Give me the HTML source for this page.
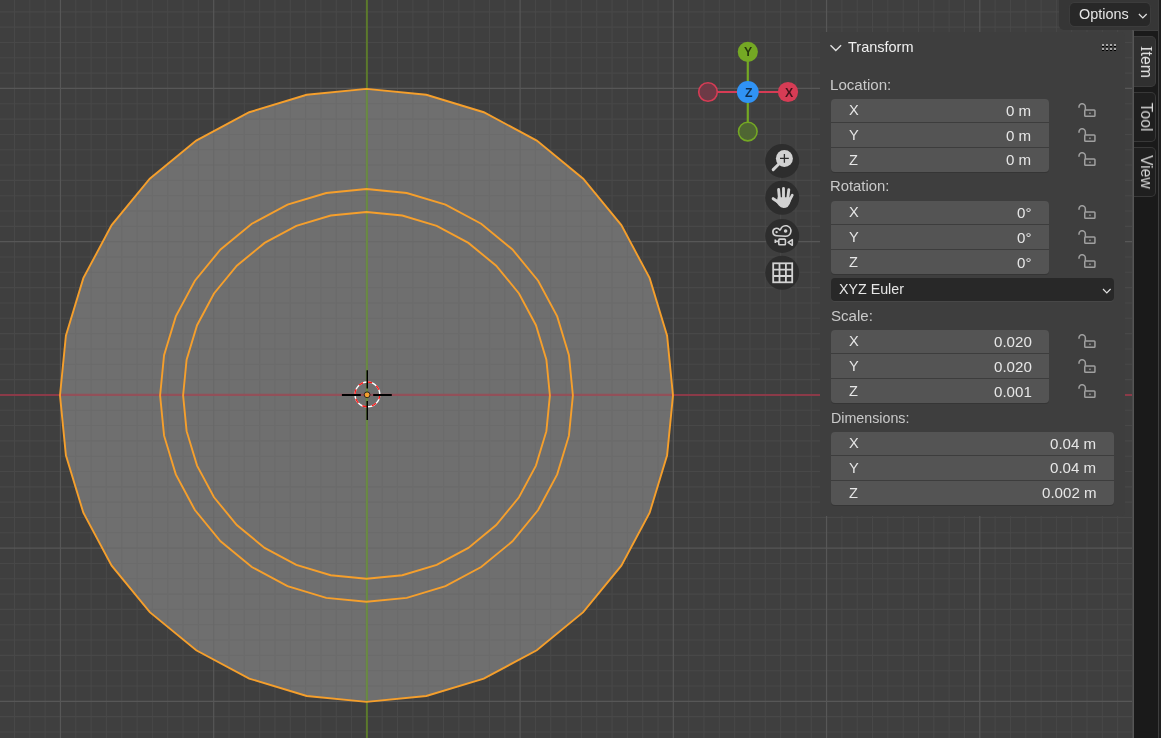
<!DOCTYPE html>
<html><head><meta charset="utf-8"><style>
html,body{margin:0;padding:0;width:1161px;height:738px;overflow:hidden;background:#3f3f3f;}
*{box-sizing:border-box}
body{position:relative;font-family:"Liberation Sans",sans-serif;}
.abs{position:absolute}
.t{position:absolute;white-space:pre;will-change:transform}
.panel{position:absolute;left:820px;top:32px;width:305px;height:484px;background:#3e3e3e;border-radius:4px}
.fld{position:absolute;background:#545454;border-radius:4px;box-shadow:0 1px 0 #353535}
.sep{position:absolute;height:1px;background:#3d3d3d}
.tabs{position:absolute;left:1134px;top:31px;width:24px;height:707px;background:#1a1a1a}
.tab{position:absolute;left:0;width:22px;border-radius:0 5px 5px 0;}
.tabtxt{position:absolute;left:50%;top:50%;transform:translate(-50%,-50%) rotate(90deg);font-size:15.6px;margin-left:1px;color:#e6e6e6;white-space:pre;line-height:16px;will-change:transform}
</style></head><body>
<svg width="1161" height="738" viewBox="0 0 1161 738" style="position:absolute;left:0;top:0">
<rect width="1161" height="738" fill="#3f3f3f"/>
<path d="M-0.83 0V738M14.49 0V738M29.82 0V738M45.14 0V738M75.78 0V738M91.1 0V738M106.43 0V738M121.75 0V738M137.07 0V738M152.39 0V738M167.71 0V738M183.04 0V738M198.36 0V738M229 0V738M244.32 0V738M259.65 0V738M274.97 0V738M290.29 0V738M305.61 0V738M320.93 0V738M336.26 0V738M351.58 0V738M382.22 0V738M397.54 0V738M412.87 0V738M428.19 0V738M443.51 0V738M458.83 0V738M474.15 0V738M489.48 0V738M504.8 0V738M535.44 0V738M550.76 0V738M566.09 0V738M581.41 0V738M596.73 0V738M612.05 0V738M627.37 0V738M642.7 0V738M658.02 0V738M688.66 0V738M703.98 0V738M719.31 0V738M734.63 0V738M749.95 0V738M765.27 0V738M780.59 0V738M795.92 0V738M811.24 0V738M841.88 0V738M857.2 0V738M872.53 0V738M887.85 0V738M903.17 0V738M918.49 0V738M933.81 0V738M949.14 0V738M964.46 0V738M995.1 0V738M1010.42 0V738M1025.75 0V738M1041.07 0V738M1056.39 0V738M1071.71 0V738M1087.03 0V738M1102.36 0V738M1117.68 0V738M0 11.85H1134M0 27.17H1134M0 42.49H1134M0 57.82H1134M0 73.14H1134M0 103.78H1134M0 119.1H1134M0 134.43H1134M0 149.75H1134M0 165.07H1134M0 180.39H1134M0 195.71H1134M0 211.04H1134M0 226.36H1134M0 257H1134M0 272.32H1134M0 287.65H1134M0 302.97H1134M0 318.29H1134M0 333.61H1134M0 348.93H1134M0 364.26H1134M0 379.58H1134M0 410.22H1134M0 425.54H1134M0 440.87H1134M0 456.19H1134M0 471.51H1134M0 486.83H1134M0 502.15H1134M0 517.48H1134M0 532.8H1134M0 563.44H1134M0 578.76H1134M0 594.09H1134M0 609.41H1134M0 624.73H1134M0 640.05H1134M0 655.37H1134M0 670.7H1134M0 686.02H1134M0 716.66H1134M0 731.98H1134" stroke="#484848" stroke-width="1.1" fill="none"/>
<path d="M60.46 0V738M213.68 0V738M520.12 0V738M673.34 0V738M826.56 0V738M979.78 0V738M1133 0V738M0 88.46H1134M0 241.68H1134M0 548.12H1134M0 701.34H1134" stroke="#575757" stroke-width="1.2" fill="none"/>
<polygon points="366.5,88.9 426.3,94.79 483.79,112.23 536.78,140.55 583.23,178.67 621.35,225.12 649.67,278.11 667.11,335.6 673,395.4 667.11,455.2 649.67,512.69 621.35,565.68 583.23,612.13 536.78,650.25 483.79,678.57 426.3,696.01 366.5,701.9 306.7,696.01 249.21,678.57 196.22,650.25 149.77,612.13 111.65,565.68 83.33,512.69 65.89,455.2 60,395.4 65.89,335.6 83.33,278.11 111.65,225.12 149.77,178.67 196.22,140.55 249.21,112.23 306.7,94.79" fill="#6f6f6f"/>
<path d="M-0.83 0V738M14.49 0V738M29.82 0V738M45.14 0V738M75.78 0V738M91.1 0V738M106.43 0V738M121.75 0V738M137.07 0V738M152.39 0V738M167.71 0V738M183.04 0V738M198.36 0V738M229 0V738M244.32 0V738M259.65 0V738M274.97 0V738M290.29 0V738M305.61 0V738M320.93 0V738M336.26 0V738M351.58 0V738M382.22 0V738M397.54 0V738M412.87 0V738M428.19 0V738M443.51 0V738M458.83 0V738M474.15 0V738M489.48 0V738M504.8 0V738M535.44 0V738M550.76 0V738M566.09 0V738M581.41 0V738M596.73 0V738M612.05 0V738M627.37 0V738M642.7 0V738M658.02 0V738M688.66 0V738M703.98 0V738M719.31 0V738M734.63 0V738M749.95 0V738M765.27 0V738M780.59 0V738M795.92 0V738M811.24 0V738M841.88 0V738M857.2 0V738M872.53 0V738M887.85 0V738M903.17 0V738M918.49 0V738M933.81 0V738M949.14 0V738M964.46 0V738M995.1 0V738M1010.42 0V738M1025.75 0V738M1041.07 0V738M1056.39 0V738M1071.71 0V738M1087.03 0V738M1102.36 0V738M1117.68 0V738M0 11.85H1134M0 27.17H1134M0 42.49H1134M0 57.82H1134M0 73.14H1134M0 103.78H1134M0 119.1H1134M0 134.43H1134M0 149.75H1134M0 165.07H1134M0 180.39H1134M0 195.71H1134M0 211.04H1134M0 226.36H1134M0 257H1134M0 272.32H1134M0 287.65H1134M0 302.97H1134M0 318.29H1134M0 333.61H1134M0 348.93H1134M0 364.26H1134M0 379.58H1134M0 410.22H1134M0 425.54H1134M0 440.87H1134M0 456.19H1134M0 471.51H1134M0 486.83H1134M0 502.15H1134M0 517.48H1134M0 532.8H1134M0 563.44H1134M0 578.76H1134M0 594.09H1134M0 609.41H1134M0 624.73H1134M0 640.05H1134M0 655.37H1134M0 670.7H1134M0 686.02H1134M0 716.66H1134M0 731.98H1134" stroke="#6b6b6b" stroke-width="1.1" fill="none" clip-path="url(#disk)"/>
<path d="M60.46 0V738M213.68 0V738M520.12 0V738M673.34 0V738M826.56 0V738M979.78 0V738M1133 0V738M0 88.46H1134M0 241.68H1134M0 548.12H1134M0 701.34H1134" stroke="#696969" stroke-width="1.2" fill="none" clip-path="url(#disk)"/>
<clipPath id="disk"><polygon points="366.5,88.9 426.3,94.79 483.79,112.23 536.78,140.55 583.23,178.67 621.35,225.12 649.67,278.11 667.11,335.6 673,395.4 667.11,455.2 649.67,512.69 621.35,565.68 583.23,612.13 536.78,650.25 483.79,678.57 426.3,696.01 366.5,701.9 306.7,696.01 249.21,678.57 196.22,650.25 149.77,612.13 111.65,565.68 83.33,512.69 65.89,455.2 60,395.4 65.89,335.6 83.33,278.11 111.65,225.12 149.77,178.67 196.22,140.55 249.21,112.23 306.7,94.79"/></clipPath>
<line x1="0" y1="394.9" x2="1134" y2="394.9" stroke="#8b3a48" stroke-width="2"/>
<line x1="366.9" y1="0" x2="366.9" y2="738" stroke="#5c7a2c" stroke-width="2"/>
<g clip-path="url(#disk)">
<line x1="0" y1="394.9" x2="1134" y2="394.9" stroke="#925059" stroke-width="2.1"/>
<line x1="366.9" y1="0" x2="366.9" y2="738" stroke="#6a8a45" stroke-width="2"/>
</g>
<polygon points="366.5,88.9 426.3,94.79 483.79,112.23 536.78,140.55 583.23,178.67 621.35,225.12 649.67,278.11 667.11,335.6 673,395.4 667.11,455.2 649.67,512.69 621.35,565.68 583.23,612.13 536.78,650.25 483.79,678.57 426.3,696.01 366.5,701.9 306.7,696.01 249.21,678.57 196.22,650.25 149.77,612.13 111.65,565.68 83.33,512.69 65.89,455.2 60,395.4 65.89,335.6 83.33,278.11 111.65,225.12 149.77,178.67 196.22,140.55 249.21,112.23 306.7,94.79" fill="none" stroke="#f59f2c" stroke-width="1.9"/>
<polygon points="366.5,189 406.77,192.97 445.49,204.71 481.17,223.78 512.45,249.45 538.12,280.73 557.19,316.41 568.93,355.13 572.9,395.4 568.93,435.67 557.19,474.39 538.12,510.07 512.45,541.35 481.17,567.02 445.49,586.09 406.77,597.83 366.5,601.8 326.23,597.83 287.51,586.09 251.83,567.02 220.55,541.35 194.88,510.07 175.81,474.39 164.07,435.67 160.1,395.4 164.07,355.13 175.81,316.41 194.88,280.73 220.55,249.45 251.83,223.78 287.51,204.71 326.23,192.97" fill="none" stroke="#f59f2c" stroke-width="1.9"/>
<polygon points="366.5,212 402.28,215.52 436.68,225.96 468.39,242.91 496.18,265.72 518.99,293.51 535.94,325.22 546.38,359.62 549.9,395.4 546.38,431.18 535.94,465.58 518.99,497.29 496.18,525.08 468.39,547.89 436.68,564.84 402.28,575.28 366.5,578.8 330.72,575.28 296.32,564.84 264.61,547.89 236.82,525.08 214.01,497.29 197.06,465.58 186.62,431.18 183.1,395.4 186.62,359.62 197.06,325.22 214.01,293.51 236.82,265.72 264.61,242.91 296.32,225.96 330.72,215.52" fill="none" stroke="#f59f2c" stroke-width="1.9"/>
<!-- 3d cursor -->
<g>
<circle cx="367.4" cy="394.4" r="12.4" fill="none" stroke="#ffffff" stroke-width="1.4"/>
<circle cx="367.4" cy="394.4" r="12.4" fill="none" stroke="#ff1a1a" stroke-width="1.4" stroke-dasharray="4.87" transform="rotate(-90 367.4 394.4)"/>
<path d="M341.9 395H360.8M373.2 395H391.8" stroke="#000" stroke-width="1.8"/><path d="M367.25 370.2V388.6M367.25 401V420" stroke="#000" stroke-width="1.5"/>
<circle cx="367.1" cy="394.8" r="2.9" fill="#f5a030" stroke="#1c1c1c" stroke-width="0.9"/>
</g>
<!-- gizmo -->
<line x1="708" y1="92" x2="788" y2="92" stroke="#d63c55" stroke-width="2.2"/>
<line x1="747.8" y1="52" x2="747.8" y2="132" stroke="#74a824" stroke-width="2.2"/>
<circle cx="708" cy="92" r="9.3" fill="#6d3a46" stroke="#d63c55" stroke-width="1.6"/>
<circle cx="747.8" cy="131.6" r="9.3" fill="#4f6633" stroke="#74a824" stroke-width="1.6"/>
<circle cx="747.8" cy="51.8" r="10.1" fill="#74a824"/>
<circle cx="788" cy="92" r="10.1" fill="#d63c55"/>
<circle cx="747.8" cy="92" r="10.9" fill="#3093f5"/>

<!-- nav buttons -->
<g fill="#2d2d2d">
<circle cx="782.2" cy="160.9" r="17"/>
<circle cx="782.2" cy="197.7" r="17"/>
<circle cx="782.2" cy="235.9" r="17"/>
<circle cx="782.2" cy="272.7" r="17"/>
</g>
<g fill="#d2d2d2" stroke="none">
<circle cx="784.4" cy="158.4" r="8.5"/>
<path d="M773.2 169.6L778.6 164.2" stroke="#d2d2d2" stroke-width="3" stroke-linecap="round"/>
<path d="M780 158.4H788.8M784.4 154V162.8" stroke="#2c2c2c" stroke-width="1.3"/>
</g>
<g stroke="#d2d2d2" stroke-linecap="round" fill="none">
<path d="M778.6 189.5L779.4 198M783.5 188.4V198M788.8 189.7L787.8 198" stroke-width="2.9"/>
<path d="M792.3 195.2L789.6 200.5" stroke-width="2.7"/>
<path d="M773.2 198.7L777.8 201.8" stroke-width="3"/>
</g>
<path d="M777.6 197.2H790.6L791 200.5Q790 204.5 787.6 207Q786 208.1 783.6 208.1Q780.6 208 778.8 205.6L776.2 202.2L777.2 199.5Z" fill="#d2d2d2"/>
<g fill="none" stroke="#d2d2d2" stroke-width="1.6" stroke-linejoin="round">
<path d="M776.6 235.7A3.7 3.7 0 1 1 779.8 230.15L780.62 229.19A5.3 5.3 0 1 1 785.6 236.3Z"/>
<circle cx="776.6" cy="232.1" r="1.2" fill="#d2d2d2" stroke="none"/>
<circle cx="785.6" cy="231" r="1.8" fill="#d2d2d2" stroke="none"/>
<rect x="778.8" y="239.1" width="6.6" height="5.6" rx="0.8"/>
<path d="M775.3 239.6V243.1M775.3 241.35H778.8"/>
<path d="M792.3 239.6V245.3L788.1 242.45Z"/>
</g>
<g fill="none" stroke="#d2d2d2" stroke-width="1.8">
<rect x="773.2" y="263.3" width="19" height="19"/>
<path d="M779.5 263.3V282.3M785.9 263.3V282.3M773.2 269.6H792.2M773.2 276H792.2"/>
</g>
</svg>
<div class="t" style="left:743.9px;top:46.19px;font-size:12.3px;line-height:12.3px;color:rgba(0,0,0,0.68);transform:scaleY(1.0);transform-origin:0 10.41px;font-weight:bold">Y</div>
<div class="t" style="left:784.8px;top:86.89px;font-size:12.3px;line-height:12.3px;color:rgba(0,0,0,0.68);transform:scaleY(1.0);transform-origin:0 10.41px;font-weight:bold">X</div>
<div class="t" style="left:744.6px;top:87.09px;font-size:12.3px;line-height:12.3px;color:rgba(0,0,0,0.68);transform:scaleY(1.0);transform-origin:0 10.41px;font-weight:bold">Z</div>
<!-- header region -->
<div class="abs" style="left:1059.3px;top:0;width:98.7px;height:29.6px;background:#363636;border-radius:0 0 0 5px"></div>
<div class="abs" style="left:1069.6px;top:3px;width:80.6px;height:23.2px;background:#282828;border-radius:4.5px;box-shadow:0 0 0 1px #3c3c3c"></div>
<div class="t" style="left:1079.4px;top:6.61px;font-size:14.4px;line-height:14.4px;color:#e6e6e6;transform:scaleY(1.0);transform-origin:0 12.19px;">Options</div>
<svg class="abs" style="left:1136px;top:10.5px" width="14" height="10" viewBox="0 0 14 10"><path d="M2.9 3L6.8 6.9L10.7 3" fill="none" stroke="#e0e0e0" stroke-width="1.3"/></svg>
<div class="abs" style="left:1133px;top:31px;width:1px;height:707px;background:#565656"></div>
<div class="abs" style="left:1132px;top:31px;width:1px;height:707px;background:#4a4a4a"></div>
<div class="tabs"></div>
<div class="abs" style="left:1158px;top:0;width:1px;height:738px;background:#3e3e3e"></div>
<div class="abs" style="left:1159px;top:0;width:2px;height:738px;background:#1f1f1f"></div>
<div class="tab abs" style="left:1134px;top:36px;height:51px;background:#303030;border:1px solid #3c3c3c;border-left:none"><div class="tabtxt" style="font-size:15.8px"><span style="font-family:'Liberation Serif',serif;font-size:16.5px">I</span>tem</div></div>
<div class="tab abs" style="left:1134px;top:92px;height:49.5px;background:#1f1f1f;border:1px solid #383838;border-left:none"><div class="tabtxt" style="color:#d8d8d8">Tool</div></div>
<div class="tab abs" style="left:1134px;top:146.5px;height:50.5px;background:#1f1f1f;border:1px solid #383838;border-left:none"><div class="tabtxt" style="color:#d8d8d8">View</div></div>
<!-- panel -->
<div class="panel"></div>
<svg class="abs" style="left:828px;top:42px" width="16" height="12" viewBox="0 0 16 12"><path d="M2.5 3.2L7.8 8.5L13.1 3.2" fill="none" stroke="#e0e0e0" stroke-width="1.4"/></svg>
<div class="t" style="left:847.9px;top:40.43px;font-size:14.5px;line-height:14.5px;color:#f0f0f0;transform:scaleY(1.0);transform-origin:0 12.27px;">Transform</div>
<svg class="abs" style="left:1101px;top:43px" width="17" height="10" viewBox="0 0 17 10">
<g fill="#000"><rect x="1" y="3" width="2" height="1"/><rect x="1" y="7" width="2" height="1"/><rect x="5" y="3" width="2" height="1"/><rect x="5" y="7" width="2" height="1"/><rect x="9" y="3" width="2" height="1"/><rect x="9" y="7" width="2" height="1"/><rect x="13" y="3" width="2" height="1"/><rect x="13" y="7" width="2" height="1"/></g>
<g fill="#a8a8a8"><rect x="1" y="1" width="2" height="2"/><rect x="1" y="5" width="2" height="2"/><rect x="5" y="1" width="2" height="2"/><rect x="5" y="5" width="2" height="2"/><rect x="9" y="1" width="2" height="2"/><rect x="9" y="5" width="2" height="2"/><rect x="13" y="1" width="2" height="2"/><rect x="13" y="5" width="2" height="2"/></g>
</svg>
<div class="t" style="left:830.3px;top:77.22px;font-size:15.1px;line-height:15.1px;color:#c9c9c9;transform:scaleY(1.0);transform-origin:0 12.78px;">Location:</div>
<div class="fld" style="left:831px;top:99px;width:218px;height:73px"></div><div class="sep" style="left:831px;width:218px;top:122px"></div><div class="sep" style="left:831px;width:218px;top:147px"></div><div class="t" style="left:848.7px;top:103.14px;font-size:14.6px;line-height:14.6px;color:#e6e6e6;transform:scaleY(1.0);transform-origin:0 12.36px;">X</div><div class="t" style="right:129.5px;top:102.72px;font-size:15.1px;line-height:15.1px;color:#e6e6e6;transform:scaleY(1.0);transform-origin:0 12.78px;">0 m</div><div class="t" style="left:848.7px;top:127.99px;font-size:14.6px;line-height:14.6px;color:#e6e6e6;transform:scaleY(1.0);transform-origin:0 12.36px;">Y</div><div class="t" style="right:129.5px;top:127.57px;font-size:15.1px;line-height:15.1px;color:#e6e6e6;transform:scaleY(1.0);transform-origin:0 12.78px;">0 m</div><div class="t" style="left:848.7px;top:152.84px;font-size:14.6px;line-height:14.6px;color:#e6e6e6;transform:scaleY(1.0);transform-origin:0 12.36px;">Z</div><div class="t" style="right:129.5px;top:152.42px;font-size:15.1px;line-height:15.1px;color:#e6e6e6;transform:scaleY(1.0);transform-origin:0 12.78px;">0 m</div><svg style="position:absolute;left:1077.3px;top:103px" width="20" height="16" viewBox="0 0 20 16">
<path d="M2.18 4.8A3.15 3.15 0 1 1 8.35 3.9V6.95" fill="none" stroke="#a0a0a0" stroke-width="1.5"/>
<rect x="7.75" y="6.95" width="10.2" height="6.3" rx="0.8" fill="none" stroke="#a0a0a0" stroke-width="1.5"/>
<rect x="12.3" y="9.5" width="1.3" height="1.6" fill="#a0a0a0"/>
</svg><svg style="position:absolute;left:1077.3px;top:127.6px" width="20" height="16" viewBox="0 0 20 16">
<path d="M2.18 4.8A3.15 3.15 0 1 1 8.35 3.9V6.95" fill="none" stroke="#a0a0a0" stroke-width="1.5"/>
<rect x="7.75" y="6.95" width="10.2" height="6.3" rx="0.8" fill="none" stroke="#a0a0a0" stroke-width="1.5"/>
<rect x="12.3" y="9.5" width="1.3" height="1.6" fill="#a0a0a0"/>
</svg><svg style="position:absolute;left:1077.3px;top:152.2px" width="20" height="16" viewBox="0 0 20 16">
<path d="M2.18 4.8A3.15 3.15 0 1 1 8.35 3.9V6.95" fill="none" stroke="#a0a0a0" stroke-width="1.5"/>
<rect x="7.75" y="6.95" width="10.2" height="6.3" rx="0.8" fill="none" stroke="#a0a0a0" stroke-width="1.5"/>
<rect x="12.3" y="9.5" width="1.3" height="1.6" fill="#a0a0a0"/>
</svg>
<div class="t" style="left:830.3px;top:179.23px;font-size:14.85px;line-height:14.85px;color:#c9c9c9;transform:scaleY(1.0);transform-origin:0 12.57px;">Rotation:</div>
<div class="fld" style="left:831px;top:201.2px;width:218px;height:73px"></div><div class="sep" style="left:831px;width:218px;top:224.2px"></div><div class="sep" style="left:831px;width:218px;top:249.2px"></div><div class="t" style="left:848.7px;top:205.34px;font-size:14.6px;line-height:14.6px;color:#e6e6e6;transform:scaleY(1.0);transform-origin:0 12.36px;">X</div><div class="t" style="right:129.5px;top:204.92px;font-size:15.1px;line-height:15.1px;color:#e6e6e6;transform:scaleY(1.0);transform-origin:0 12.78px;">0°</div><div class="t" style="left:848.7px;top:230.19px;font-size:14.6px;line-height:14.6px;color:#e6e6e6;transform:scaleY(1.0);transform-origin:0 12.36px;">Y</div><div class="t" style="right:129.5px;top:229.77px;font-size:15.1px;line-height:15.1px;color:#e6e6e6;transform:scaleY(1.0);transform-origin:0 12.78px;">0°</div><div class="t" style="left:848.7px;top:255.04px;font-size:14.6px;line-height:14.6px;color:#e6e6e6;transform:scaleY(1.0);transform-origin:0 12.36px;">Z</div><div class="t" style="right:129.5px;top:254.62px;font-size:15.1px;line-height:15.1px;color:#e6e6e6;transform:scaleY(1.0);transform-origin:0 12.78px;">0°</div><svg style="position:absolute;left:1077.3px;top:205.2px" width="20" height="16" viewBox="0 0 20 16">
<path d="M2.18 4.8A3.15 3.15 0 1 1 8.35 3.9V6.95" fill="none" stroke="#a0a0a0" stroke-width="1.5"/>
<rect x="7.75" y="6.95" width="10.2" height="6.3" rx="0.8" fill="none" stroke="#a0a0a0" stroke-width="1.5"/>
<rect x="12.3" y="9.5" width="1.3" height="1.6" fill="#a0a0a0"/>
</svg><svg style="position:absolute;left:1077.3px;top:229.8px" width="20" height="16" viewBox="0 0 20 16">
<path d="M2.18 4.8A3.15 3.15 0 1 1 8.35 3.9V6.95" fill="none" stroke="#a0a0a0" stroke-width="1.5"/>
<rect x="7.75" y="6.95" width="10.2" height="6.3" rx="0.8" fill="none" stroke="#a0a0a0" stroke-width="1.5"/>
<rect x="12.3" y="9.5" width="1.3" height="1.6" fill="#a0a0a0"/>
</svg><svg style="position:absolute;left:1077.3px;top:254.4px" width="20" height="16" viewBox="0 0 20 16">
<path d="M2.18 4.8A3.15 3.15 0 1 1 8.35 3.9V6.95" fill="none" stroke="#a0a0a0" stroke-width="1.5"/>
<rect x="7.75" y="6.95" width="10.2" height="6.3" rx="0.8" fill="none" stroke="#a0a0a0" stroke-width="1.5"/>
<rect x="12.3" y="9.5" width="1.3" height="1.6" fill="#a0a0a0"/>
</svg>
<div class="abs" style="left:831px;top:277.8px;width:283px;height:22.8px;background:#282828;border-radius:4px;box-shadow:0 1px 0 #474747"></div>
<div class="t" style="left:839.3px;top:282.04px;font-size:14.25px;line-height:14.25px;color:#e6e6e6;transform:scaleY(1.0);transform-origin:0 12.06px;">XYZ Euler</div>
<svg class="abs" style="left:1100px;top:285.5px" width="14" height="10" viewBox="0 0 14 10"><path d="M3 3L6.8 6.8L10.6 3" fill="none" stroke="#e0e0e0" stroke-width="1.2"/></svg>
<div class="t" style="left:830.5px;top:308.12px;font-size:15.1px;line-height:15.1px;color:#c9c9c9;transform:scaleY(1.0);transform-origin:0 12.78px;">Scale:</div>
<div class="fld" style="left:831px;top:330.3px;width:218px;height:73px"></div><div class="sep" style="left:831px;width:218px;top:353.3px"></div><div class="sep" style="left:831px;width:218px;top:378.3px"></div><div class="t" style="left:848.7px;top:334.44px;font-size:14.6px;line-height:14.6px;color:#e6e6e6;transform:scaleY(1.0);transform-origin:0 12.36px;">X</div><div class="t" style="right:129.5px;top:334.02px;font-size:15.1px;line-height:15.1px;color:#e6e6e6;transform:scaleY(1.0);transform-origin:0 12.78px;">0.020</div><div class="t" style="left:848.7px;top:359.29px;font-size:14.6px;line-height:14.6px;color:#e6e6e6;transform:scaleY(1.0);transform-origin:0 12.36px;">Y</div><div class="t" style="right:129.5px;top:358.87px;font-size:15.1px;line-height:15.1px;color:#e6e6e6;transform:scaleY(1.0);transform-origin:0 12.78px;">0.020</div><div class="t" style="left:848.7px;top:384.14px;font-size:14.6px;line-height:14.6px;color:#e6e6e6;transform:scaleY(1.0);transform-origin:0 12.36px;">Z</div><div class="t" style="right:129.5px;top:383.72px;font-size:15.1px;line-height:15.1px;color:#e6e6e6;transform:scaleY(1.0);transform-origin:0 12.78px;">0.001</div><svg style="position:absolute;left:1077.3px;top:334.3px" width="20" height="16" viewBox="0 0 20 16">
<path d="M2.18 4.8A3.15 3.15 0 1 1 8.35 3.9V6.95" fill="none" stroke="#a0a0a0" stroke-width="1.5"/>
<rect x="7.75" y="6.95" width="10.2" height="6.3" rx="0.8" fill="none" stroke="#a0a0a0" stroke-width="1.5"/>
<rect x="12.3" y="9.5" width="1.3" height="1.6" fill="#a0a0a0"/>
</svg><svg style="position:absolute;left:1077.3px;top:358.9px" width="20" height="16" viewBox="0 0 20 16">
<path d="M2.18 4.8A3.15 3.15 0 1 1 8.35 3.9V6.95" fill="none" stroke="#a0a0a0" stroke-width="1.5"/>
<rect x="7.75" y="6.95" width="10.2" height="6.3" rx="0.8" fill="none" stroke="#a0a0a0" stroke-width="1.5"/>
<rect x="12.3" y="9.5" width="1.3" height="1.6" fill="#a0a0a0"/>
</svg><svg style="position:absolute;left:1077.3px;top:383.5px" width="20" height="16" viewBox="0 0 20 16">
<path d="M2.18 4.8A3.15 3.15 0 1 1 8.35 3.9V6.95" fill="none" stroke="#a0a0a0" stroke-width="1.5"/>
<rect x="7.75" y="6.95" width="10.2" height="6.3" rx="0.8" fill="none" stroke="#a0a0a0" stroke-width="1.5"/>
<rect x="12.3" y="9.5" width="1.3" height="1.6" fill="#a0a0a0"/>
</svg>
<div class="t" style="left:830.5px;top:411.04px;font-size:14.25px;line-height:14.25px;color:#c9c9c9;transform:scaleY(1.0);transform-origin:0 12.06px;">Dimensions:</div>
<div class="fld" style="left:831px;top:431.9px;width:283px;height:73px"></div><div class="sep" style="left:831px;width:283px;top:454.9px"></div><div class="sep" style="left:831px;width:283px;top:479.9px"></div><div class="t" style="left:848.7px;top:436.04px;font-size:14.6px;line-height:14.6px;color:#e6e6e6;transform:scaleY(1.0);transform-origin:0 12.36px;">X</div><div class="t" style="right:64.5px;top:435.62px;font-size:15.1px;line-height:15.1px;color:#e6e6e6;transform:scaleY(1.0);transform-origin:0 12.78px;">0.04 m</div><div class="t" style="left:848.7px;top:460.89px;font-size:14.6px;line-height:14.6px;color:#e6e6e6;transform:scaleY(1.0);transform-origin:0 12.36px;">Y</div><div class="t" style="right:64.5px;top:460.47px;font-size:15.1px;line-height:15.1px;color:#e6e6e6;transform:scaleY(1.0);transform-origin:0 12.78px;">0.04 m</div><div class="t" style="left:848.7px;top:485.74px;font-size:14.6px;line-height:14.6px;color:#e6e6e6;transform:scaleY(1.0);transform-origin:0 12.36px;">Z</div><div class="t" style="right:64.5px;top:485.32px;font-size:15.1px;line-height:15.1px;color:#e6e6e6;transform:scaleY(1.0);transform-origin:0 12.78px;">0.002 m</div>
</body></html>
